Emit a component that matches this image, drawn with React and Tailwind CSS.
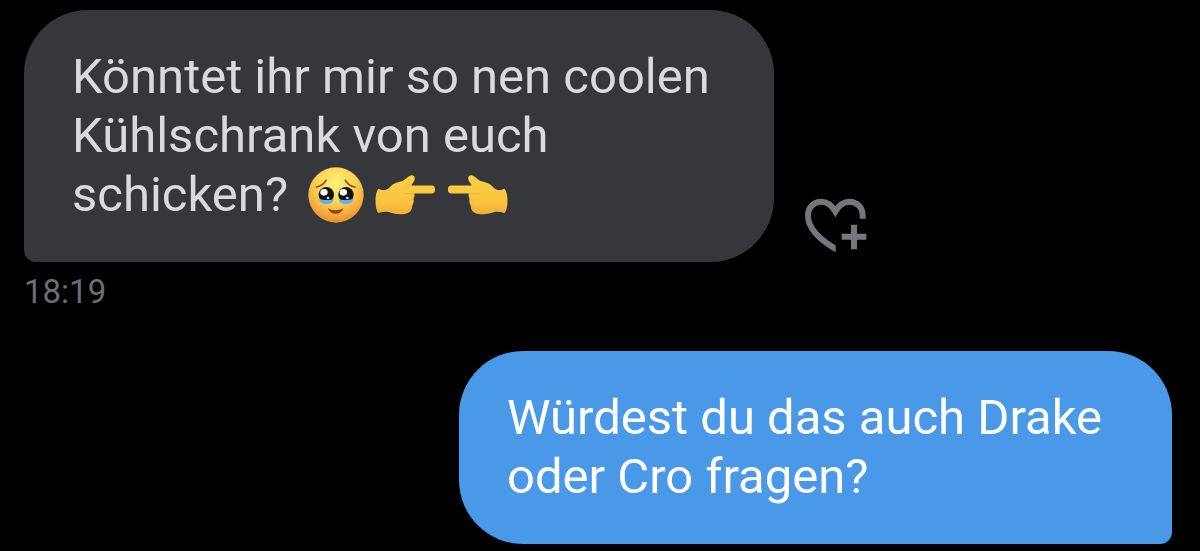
import React, { useState } from 'react';

function TearyFace() {
  return (
    <svg viewBox="37 33 168 168" className="h-14 w-14 shrink-0" role="img" aria-label="🥹">
      <defs>
        <radialGradient id="face" cx="0.5" cy="0.3" r="0.72">
          <stop offset="0" stopColor="#fff27c" />
          <stop offset="0.45" stopColor="#fcd556" />
          <stop offset="0.8" stopColor="#f3a93c" />
          <stop offset="1" stopColor="#e08a2b" />
        </radialGradient>
      </defs>
      <circle cx="121" cy="117" r="83" fill="url(#face)" />
      <path d="M62 93 C74 91 84 85 91 73" fill="none" stroke="#8a4a14" strokeWidth="5" strokeLinecap="round" />
      <path d="M149 73 C156 85 166 91 178 93" fill="none" stroke="#8a4a14" strokeWidth="5" strokeLinecap="round" />
      <circle cx="92" cy="116" r="23" fill="#101114" />
      <circle cx="151" cy="116" r="23" fill="#101114" />
      <path d="M70 128 C80 132 102 134 114 129 C114 138 105 144 93 144 C81 144 72 138 70 128 Z" fill="#5fb4ea" />
      <path d="M129 129 C141 134 163 132 173 128 C171 138 162 144 150 144 C138 144 129 138 129 129 Z" fill="#5fb4ea" />
      <ellipse cx="85" cy="109" rx="11" ry="10" fill="#fff" />
      <ellipse cx="143" cy="109" rx="11" ry="10" fill="#fff" />
      <circle cx="97" cy="126" r="4" fill="#c9dfee" />
      <circle cx="155" cy="126" r="4" fill="#c9dfee" />
      <path d="M97 156 C108 165 132 165 143 156 C138 179 102 179 97 156 Z" fill="#8a4a14" />
    </svg>
  );
}

function PointingHand({ label, flipped }) {
  return (
    <svg
      viewBox="29 40 184 128"
      className={`h-[43px] w-[61px] shrink-0 ${flipped ? '-scale-x-100' : ''}`}
      role="img"
      aria-label={label}
    >
      <defs>
        <linearGradient id="skin" x1="0" y1="0" x2="0" y2="1">
          <stop offset="0" stopColor="#fdd047" />
          <stop offset="0.7" stopColor="#fac43e" />
          <stop offset="1" stopColor="#eeae38" />
        </linearGradient>
      </defs>
      <path
        d="M40 87 C52 94 64 92 72 84 C82 70 98 67 112 63 C123 58 130 47 140 46 C150 47 151 56 147 63 L138 77 H202 C213 78 213 100 202 101 H147 C149 106 148 111 145 115 C147 124 145 132 141 137 C141 151 134 160 121 162 C102 166 82 162 70 157 C60 155 50 157 40 160 C28 151 27 98 40 87 Z"
        fill="url(#skin)"
      />
      <path d="M147 101 H118 M145 115 C143 119 139 121 134 121 M141 137 C139 140 135 142 130 142" fill="none" stroke="#f0b236" strokeWidth="3" strokeLinecap="round" />
      <path d="M138 77 C130 80 123 82 116 82" fill="none" stroke="#f0b236" strokeWidth="2" strokeLinecap="round" />
    </svg>
  );
}

function HeartPlus() {
  return (
    <svg viewBox="27 39 189 165" className="h-[55px] w-[63px]" fill="none" stroke="currentColor" strokeWidth="18" aria-hidden="true">
      <defs>
        <clipPath id="heart-cut">
          <path d="M20 30 H220 V101 H122 V210 H20 Z" />
        </clipPath>
      </defs>
      <path
        clipPath="url(#heart-cut)"
        d="M203 110 V92 C203 66 185 50 163 50 C142 50 130 64 121 79 C112 64 100 50 79 50 C56 50 39 68 39 92 C39 130 72 164 132 197"
      />
      <path d="M140 155 H214 M177 119 V193" />
    </svg>
  );
}

export default function App() {
  const [liked, setLiked] = useState(false);

  return (
    <main className="min-h-screen bg-black pt-[10px] pr-7 pb-[7px] pl-6 font-['Roboto',sans-serif]">
      <div className="flex items-end gap-[30px]">
        <p className="max-w-[750px] rounded-[64px] rounded-bl-xl bg-[#36373a] pt-[37px] pr-12 pb-[38px] pl-12 text-[49px] leading-[59px] text-[#d9dadc]">
          Könntet ihr mir so nen coolen Kühlschrank von euch schicken?{' '}
          <span className="inline-flex h-[59px] items-center gap-[11px] pl-2 align-top">
            <TearyFace />
            <PointingHand label="👉" />
            <PointingHand label="👈" flipped />
          </span>
        </p>
        <button
          type="button"
          aria-label="Reagieren"
          aria-pressed={liked}
          onClick={() => setLiked(!liked)}
          className="mb-[9px] shrink-0 text-[#75777b]"
        >
          <HeartPlus />
        </button>
      </div>
      <time className="mt-[10px] block text-[33px] leading-[40px] text-[#6c6e72]">18:19</time>
      <div className="mt-[39px] flex justify-end">
        <p className="max-w-[713px] rounded-[64px] rounded-br-xl bg-[#4a99e9] pt-[37px] pr-12 pb-[38px] pl-12 text-[49px] leading-[59px] text-white">
          Würdest du das auch Drake oder Cro fragen?
        </p>
      </div>
    </main>
  );
}
